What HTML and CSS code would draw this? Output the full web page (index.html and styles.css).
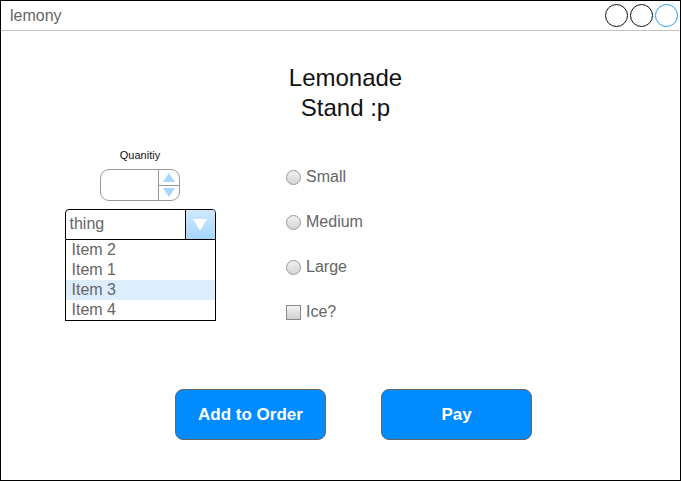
FILE: index.html
```html
<!DOCTYPE html>
<html>
<head>
<meta charset="utf-8">
<link rel="stylesheet" href="styles.css">
</head>
<body>
<div class="window">
  <div class="titlebar">
    <span class="app-name">lemony</span>
    <div class="controls">
      <span class="dot"></span>
      <span class="dot"></span>
      <span class="dot dot-blue"></span>
    </div>
  </div>
  <div class="content">
    <h1 class="heading">Lemonade<br>Stand :p</h1>
    <div class="form-row">
      <div class="left-col">
        <div class="qty-label">Quanitiy</div>
        <div class="spinner">
          <div class="spinner-field"></div>
          <div class="spinner-btns">
            <span class="arrow-up"></span>
            <span class="arrow-down"></span>
          </div>
        </div>
        <div class="select">
          <span class="select-text">thing</span>
          <span class="select-btn"><span class="select-tri"></span></span>
        </div>
        <ul class="list">
          <li>Item 2</li>
          <li>Item 1</li>
          <li class="selected">Item 3</li>
          <li>Item 4</li>
        </ul>
      </div>
      <div class="right-col">
        <label class="opt"><span class="radio"></span>Small</label>
        <label class="opt"><span class="radio"></span>Medium</label>
        <label class="opt"><span class="radio"></span>Large</label>
        <label class="opt"><span class="check"></span>Ice?</label>
      </div>
    </div>
    <div class="actions">
      <button class="btn">Add to Order</button>
      <button class="btn">Pay</button>
    </div>
  </div>
</div>
</body>
</html>
```
FILE: styles.css
```css
* { box-sizing: border-box; }
html, body { margin: 0; padding: 0; background: #fff; }
body { font-family: "Liberation Sans", Arial, sans-serif; }

.window {
  width: 681px;
  height: 481px;
  border: 1px solid #000;
  display: flex;
  flex-direction: column;
}

.titlebar {
  height: 30px;
  border-bottom: 1px solid #c4c4c4;
  display: flex;
  align-items: center;
  justify-content: space-between;
  padding: 0 2px 0 9px;
}
.app-name { font-size: 16px; color: #666; }
.controls { display: flex; gap: 2px; }
.dot {
  width: 23px; height: 23px;
  border: 1.5px solid #111;
  border-radius: 50%;
}
.dot-blue { border-color: #2b9bf4; }

.content { flex: 1; display: flex; flex-direction: column; }

.heading {
  margin: 32px 0 0;
  text-align: center;
  font-weight: normal;
  font-size: 24px;
  line-height: 30px;
  color: #111;
  padding-left: 10px;
}

.form-row { display: flex; margin-top: 25px; }

.left-col {
  width: 150px;
  margin-left: 64px;
  display: flex;
  flex-direction: column;
  align-items: center;
}
.qty-label { font-size: 11px; color: #111; line-height: 14px; }
.spinner {
  margin-top: 7px;
  width: 80px; height: 32px;
  border: 1px solid #999;
  border-radius: 9px;
  display: flex;
}
.spinner-field { flex: 1; border-right: 1px solid #999; }
.spinner-btns { width: 20px; display: flex; flex-direction: column; }
.spinner-btns span { flex: 1; display: flex; align-items: center; justify-content: center; }
.arrow-up::before, .arrow-down::before { content: ""; display: block; width: 0; height: 0; border-left: 6px solid transparent; border-right: 6px solid transparent; }
.arrow-up { border-bottom: 1px solid #999; }
.arrow-up::before { border-bottom: 9px solid #a6d6ff; }
.arrow-down::before { border-top: 9px solid #a6d6ff; }

.select {
  margin-top: 8px;
  width: 151px; height: 31px;
  border: 1px solid #000;
  border-radius: 4px 4px 0 0;
  display: flex;
  overflow: hidden;
}
.select-text { flex: 1; font-size: 16px; color: #666; padding: 5px 0 0 4px; }
.select-btn {
  width: 30px;
  border-left: 1px solid #000;
  background: linear-gradient(#cfe9ff, #a6d6ff);
  display: flex; align-items: center; justify-content: center;
}
.select-tri { width: 0; height: 0; border-left: 7px solid transparent; border-right: 7px solid transparent; border-top: 12px solid #fff; }

.list {
  list-style: none;
  margin: 0; padding: 0;
  width: 151px;
  border: 1px solid #000;
  border-top: none;
}
.list li { height: 20px; line-height: 20px; font-size: 16px; color: #666; padding-left: 6px; }
.list li.selected { background: #dcedfd; }

.right-col {
  margin-left: 71px;
  padding-top: 20px;
  display: flex;
  flex-direction: column;
  gap: 27px;
}
.opt { display: flex; align-items: center; gap: 5px; font-size: 16px; color: #666; height: 18px; }
.radio {
  width: 15px; height: 15px;
  border-radius: 50%;
  border: 1px solid #999;
  background: linear-gradient(#f2f2f2, #d4d4d4);
}
.check {
  width: 15px; height: 15px;
  border: 1px solid #888;
  background: linear-gradient(#f4f4f4, #d0d0d0);
}

.actions {
  display: flex;
  justify-content: center;
  gap: 55px;
  margin-top: 68px;
  padding-left: 26px;
}
.btn {
  width: 151px; height: 51px;
  background: #008cff;
  border: 1px solid #666;
  border-radius: 8px;
  color: #fff;
  font-family: "Liberation Sans", Arial, sans-serif;
  font-weight: bold;
  font-size: 17px;
}
```
